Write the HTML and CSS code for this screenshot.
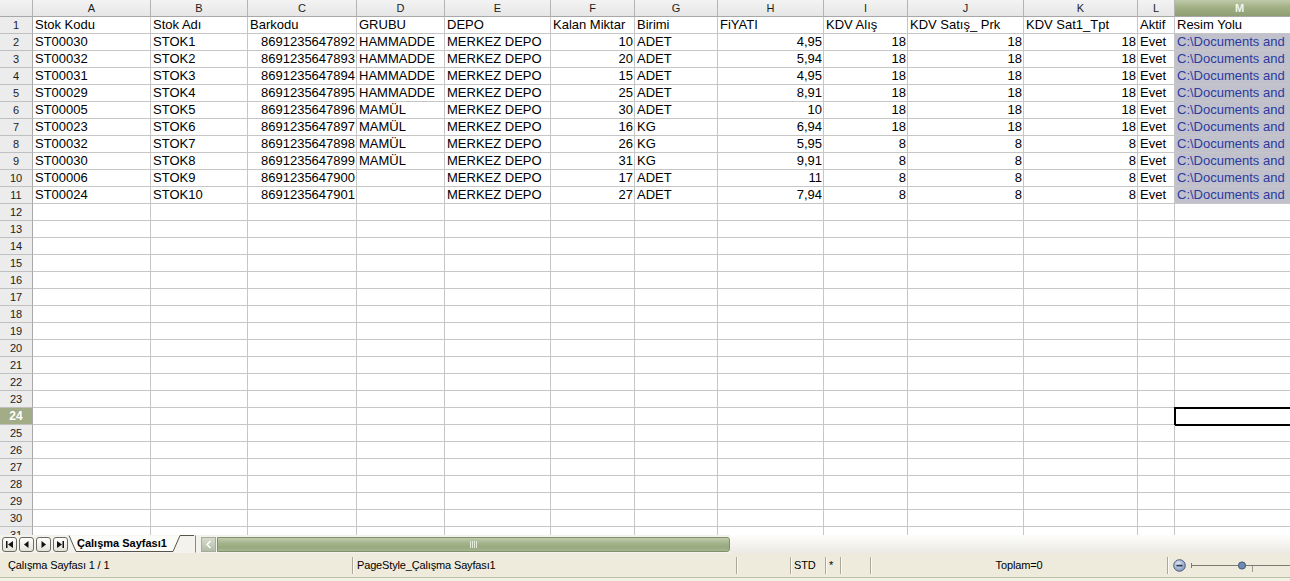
FILE: index.html
```html
<!DOCTYPE html>
<html lang="tr">
<head>
<meta charset="utf-8">
<title>Stok Listesi - Calc</title>
<link rel="stylesheet" href="styles.css">
</head>
<body>
<div class="sheet">
  <div class="corner"></div>
  <div class="ch">A</div><div class="ch">B</div><div class="ch">C</div><div class="ch">D</div><div class="ch">E</div><div class="ch">F</div><div class="ch">G</div><div class="ch">H</div><div class="ch">I</div><div class="ch">J</div><div class="ch">K</div><div class="ch">L</div><div class="ch sel">M</div>

  <div class="rh">1</div><div>Stok Kodu</div><div>Stok Adı</div><div>Barkodu</div><div>GRUBU</div><div>DEPO</div><div>Kalan Miktar</div><div>Birimi</div><div>FiYATI</div><div>KDV Alış</div><div>KDV Satış_ Prk</div><div>KDV Sat1_Tpt</div><div>Aktif</div><div>Resim Yolu</div>

  <div class="rh">2</div><div>ST00030</div><div>STOK1</div><div class="n">8691235647892</div><div>HAMMADDE</div><div>MERKEZ DEPO</div><div class="n">10</div><div>ADET</div><div class="n">4,95</div><div class="n">18</div><div class="n">18</div><div class="n">18</div><div>Evet</div><div class="hl">C:\Documents and</div>
  <div class="rh">3</div><div>ST00032</div><div>STOK2</div><div class="n">8691235647893</div><div>HAMMADDE</div><div>MERKEZ DEPO</div><div class="n">20</div><div>ADET</div><div class="n">5,94</div><div class="n">18</div><div class="n">18</div><div class="n">18</div><div>Evet</div><div class="hl">C:\Documents and</div>
  <div class="rh">4</div><div>ST00031</div><div>STOK3</div><div class="n">8691235647894</div><div>HAMMADDE</div><div>MERKEZ DEPO</div><div class="n">15</div><div>ADET</div><div class="n">4,95</div><div class="n">18</div><div class="n">18</div><div class="n">18</div><div>Evet</div><div class="hl">C:\Documents and</div>
  <div class="rh">5</div><div>ST00029</div><div>STOK4</div><div class="n">8691235647895</div><div>HAMMADDE</div><div>MERKEZ DEPO</div><div class="n">25</div><div>ADET</div><div class="n">8,91</div><div class="n">18</div><div class="n">18</div><div class="n">18</div><div>Evet</div><div class="hl">C:\Documents and</div>
  <div class="rh">6</div><div>ST00005</div><div>STOK5</div><div class="n">8691235647896</div><div>MAMÜL</div><div>MERKEZ DEPO</div><div class="n">30</div><div>ADET</div><div class="n">10</div><div class="n">18</div><div class="n">18</div><div class="n">18</div><div>Evet</div><div class="hl">C:\Documents and</div>
  <div class="rh">7</div><div>ST00023</div><div>STOK6</div><div class="n">8691235647897</div><div>MAMÜL</div><div>MERKEZ DEPO</div><div class="n">16</div><div>KG</div><div class="n">6,94</div><div class="n">18</div><div class="n">18</div><div class="n">18</div><div>Evet</div><div class="hl">C:\Documents and</div>
  <div class="rh">8</div><div>ST00032</div><div>STOK7</div><div class="n">8691235647898</div><div>MAMÜL</div><div>MERKEZ DEPO</div><div class="n">26</div><div>KG</div><div class="n">5,95</div><div class="n">8</div><div class="n">8</div><div class="n">8</div><div>Evet</div><div class="hl">C:\Documents and</div>
  <div class="rh">9</div><div>ST00030</div><div>STOK8</div><div class="n">8691235647899</div><div>MAMÜL</div><div>MERKEZ DEPO</div><div class="n">31</div><div>KG</div><div class="n">9,91</div><div class="n">8</div><div class="n">8</div><div class="n">8</div><div>Evet</div><div class="hl">C:\Documents and</div>
  <div class="rh">10</div><div>ST00006</div><div>STOK9</div><div class="n">8691235647900</div><div></div><div>MERKEZ DEPO</div><div class="n">17</div><div>ADET</div><div class="n">11</div><div class="n">8</div><div class="n">8</div><div class="n">8</div><div>Evet</div><div class="hl">C:\Documents and</div>
  <div class="rh">11</div><div>ST00024</div><div>STOK10</div><div class="n">8691235647901</div><div></div><div>MERKEZ DEPO</div><div class="n">27</div><div>ADET</div><div class="n">7,94</div><div class="n">8</div><div class="n">8</div><div class="n">8</div><div>Evet</div><div class="hl">C:\Documents and</div>

  <div class="rh">12</div><div></div><div></div><div></div><div></div><div></div><div></div><div></div><div></div><div></div><div></div><div></div><div></div><div></div>
  <div class="rh">13</div><div></div><div></div><div></div><div></div><div></div><div></div><div></div><div></div><div></div><div></div><div></div><div></div><div></div>
  <div class="rh">14</div><div></div><div></div><div></div><div></div><div></div><div></div><div></div><div></div><div></div><div></div><div></div><div></div><div></div>
  <div class="rh">15</div><div></div><div></div><div></div><div></div><div></div><div></div><div></div><div></div><div></div><div></div><div></div><div></div><div></div>
  <div class="rh">16</div><div></div><div></div><div></div><div></div><div></div><div></div><div></div><div></div><div></div><div></div><div></div><div></div><div></div>
  <div class="rh">17</div><div></div><div></div><div></div><div></div><div></div><div></div><div></div><div></div><div></div><div></div><div></div><div></div><div></div>
  <div class="rh">18</div><div></div><div></div><div></div><div></div><div></div><div></div><div></div><div></div><div></div><div></div><div></div><div></div><div></div>
  <div class="rh">19</div><div></div><div></div><div></div><div></div><div></div><div></div><div></div><div></div><div></div><div></div><div></div><div></div><div></div>
  <div class="rh">20</div><div></div><div></div><div></div><div></div><div></div><div></div><div></div><div></div><div></div><div></div><div></div><div></div><div></div>
  <div class="rh">21</div><div></div><div></div><div></div><div></div><div></div><div></div><div></div><div></div><div></div><div></div><div></div><div></div><div></div>
  <div class="rh">22</div><div></div><div></div><div></div><div></div><div></div><div></div><div></div><div></div><div></div><div></div><div></div><div></div><div></div>
  <div class="rh">23</div><div></div><div></div><div></div><div></div><div></div><div></div><div></div><div></div><div></div><div></div><div></div><div></div><div></div>
  <div class="rh sel">24</div><div></div><div></div><div></div><div></div><div></div><div></div><div></div><div></div><div></div><div></div><div></div><div></div><div class="cur"></div>
  <div class="rh">25</div><div></div><div></div><div></div><div></div><div></div><div></div><div></div><div></div><div></div><div></div><div></div><div></div><div></div>
  <div class="rh">26</div><div></div><div></div><div></div><div></div><div></div><div></div><div></div><div></div><div></div><div></div><div></div><div></div><div></div>
  <div class="rh">27</div><div></div><div></div><div></div><div></div><div></div><div></div><div></div><div></div><div></div><div></div><div></div><div></div><div></div>
  <div class="rh">28</div><div></div><div></div><div></div><div></div><div></div><div></div><div></div><div></div><div></div><div></div><div></div><div></div><div></div>
  <div class="rh">29</div><div></div><div></div><div></div><div></div><div></div><div></div><div></div><div></div><div></div><div></div><div></div><div></div><div></div>
  <div class="rh">30</div><div></div><div></div><div></div><div></div><div></div><div></div><div></div><div></div><div></div><div></div><div></div><div></div><div></div>
  <div class="rh">31</div><div></div><div></div><div></div><div></div><div></div><div></div><div></div><div></div><div></div><div></div><div></div><div></div><div></div>
</div>

<div class="tabbar">
  <div class="nav">
    <span class="navbtn"><svg width="9" height="9" viewBox="0 0 9 9"><rect x="1" y="1" width="1.5" height="7"/><path d="M8 1 L3 4.5 L8 8 Z"/></svg></span>
    <span class="navbtn"><svg width="9" height="9" viewBox="0 0 9 9"><path d="M6.5 1 L2 4.5 L6.5 8 Z"/></svg></span>
    <span class="navbtn"><svg width="9" height="9" viewBox="0 0 9 9"><path d="M2.5 1 L7 4.5 L2.5 8 Z"/></svg></span>
    <span class="navbtn"><svg width="9" height="9" viewBox="0 0 9 9"><path d="M1 1 L6 4.5 L1 8 Z"/><rect x="6.5" y="1" width="1.5" height="7"/></svg></span>
  </div>
  <div class="tab">
    <svg class="tabshape" width="133" height="18" viewBox="0 0 133 18">
      <path d="M1 0.5 L8 16.5 L105 16.5 L112 0.5 Z" fill="#fbfbf8"/>
      <path d="M1 0.5 L8 16.5 L105 16.5 L112 0.5 L126 0.5" fill="none" stroke="#55554c" stroke-width="1"/>
      <path d="M127.5 0.5 L127.5 17.5" fill="none" stroke="#8a8a80" stroke-width="1"/>
    </svg>
    <span class="tabname">Çalışma Sayfası1</span>
  </div>
  <div class="scrollleft"><svg width="7" height="9" viewBox="0 0 7 9"><path d="M5.5 1 L2 4.5 L5.5 8" fill="none" stroke="#fff" stroke-width="1.6"/></svg></div>
  <div class="track"><span class="grip"></span></div>
  <div class="tabrest"></div>
</div>

<div class="status">
  <div class="f1">Çalışma Sayfası 1 / 1</div>
  <div class="f2">PageStyle_Çalışma Sayfası1</div>
  <div class="f3"></div>
  <div class="f4">STD</div>
  <div class="f5">*</div>
  <div class="f6"></div>
  <div class="f7">Toplam=0</div>
  <div class="f8">
    <svg class="zoomout" width="13" height="13" viewBox="0 0 13 13">
      <defs><radialGradient id="zg" cx="0.4" cy="0.35" r="0.7"><stop offset="0" stop-color="#dfe7f3"/><stop offset="1" stop-color="#7d93b8"/></radialGradient></defs>
      <circle cx="6.5" cy="6.5" r="5.8" fill="url(#zg)" stroke="#4d5e80" stroke-width="1"/>
      <rect x="3.5" y="5.8" width="6" height="1.6" fill="#27344f"/>
    </svg>
    <svg class="slider" width="110" height="17" viewBox="0 0 110 17">
      <line x1="0" y1="8.5" x2="110" y2="8.5" stroke="#7b7b74" stroke-width="1"/>
      <line x1="0.5" y1="6" x2="0.5" y2="11" stroke="#7b7b74" stroke-width="1"/>
      <line x1="61.5" y1="9" x2="61.5" y2="15" stroke="#9a9a92" stroke-width="1"/>
      <circle cx="51" cy="8.5" r="3.6" fill="#6f8ab0" stroke="#3f5478" stroke-width="1"/>
    </svg>
  </div>
</div>
<div class="bottomstrip"></div>
</body>
</html>
```

FILE: styles.css
```css
html, body {
  margin: 0;
  padding: 0;
}

body {
  width: 1290px;
  height: 581px;
  overflow: hidden;
  background: #f2f0e5;
  font-family: "Liberation Sans", Arial, sans-serif;
}

/* ---------- spreadsheet grid ---------- */
.sheet {
  display: grid;
  grid-template-columns: 33px 118px 97px 109px 88px 106px 84px 83px 106px 84px 116px 114px 37px 130px;
  grid-auto-rows: 17px;
  width: 1290px;
  height: 535px;
  overflow: hidden;
  background: #fff;
}

.sheet > div {
  box-sizing: border-box;
  border-right: 1px solid #c6c6c6;
  border-bottom: 1px solid #c6c6c6;
  padding: 0 2px;
  font-size: 13px;
  line-height: 16px;
  color: #000;
  white-space: nowrap;
  overflow: hidden;
}

.sheet > .n {
  text-align: right;
  padding-right: 1px;
}

.sheet > .corner,
.sheet > .ch,
.sheet > .rh {
  background: #ececec;
  font-size: 11px;
  text-align: center;
  color: #1c1c1c;
  padding: 0;
}

.sheet > .corner,
.sheet > .ch {
  border-right-color: #b4b4b4;
  border-bottom-color: #a8a8a8;
  background: linear-gradient(#f3f3f3, #e6e6e6);
}

.sheet > .rh {
  border-right-color: #a8a8a8;
  border-bottom-color: #c0c0c0;
}

.sheet > .ch.sel {
  background: linear-gradient(#bfcaa9 0%, #a2b086 45%, #8e9d72 100%);
  color: #f4f6ee;
  font-weight: bold;
  border-right-color: #8a9870;
}

.sheet > .rh.sel {
  background: #a2ac87;
  color: #fff;
  font-weight: bold;
  font-size: 12px;
}

.sheet > .hl {
  background: #c1c1cd;
  color: #2b3a9e;
}

.sheet > .cur {
  overflow: visible;
  outline: 2px solid #000;
  outline-offset: -1px;
}

/* ---------- sheet tabs + horizontal scrollbar ---------- */
.tabbar {
  display: flex;
  align-items: center;
  height: 18px;
  background: #f3f2ec;
}

.nav {
  display: flex;
  gap: 2px;
  padding-left: 2px;
}

.navbtn {
  box-sizing: border-box;
  width: 15px;
  height: 15px;
  border: 1px solid #6a6a62;
  border-radius: 3px;
  background: linear-gradient(#ffffff, #e4e3da);
  display: flex;
  align-items: center;
  justify-content: center;
}

.navbtn svg {
  fill: #111;
}

.tab {
  position: relative;
  width: 133px;
  height: 18px;
  flex: none;
}

.tabshape {
  position: absolute;
  left: 0;
  top: 0;
}

.tabname {
  position: relative;
  display: block;
  padding-left: 9px;
  font-size: 11px;
  font-weight: bold;
  line-height: 17px;
  color: #000;
  white-space: nowrap;
}

.scrollleft {
  box-sizing: border-box;
  width: 15px;
  height: 15px;
  flex: none;
  border: 1px solid #a3ad98;
  background: linear-gradient(#d6dccd, #b3bca7);
  display: flex;
  align-items: center;
  justify-content: center;
}

.track {
  box-sizing: border-box;
  width: 513px;
  height: 15px;
  margin-left: 1px;
  flex: none;
  border: 1px solid #7f906a;
  border-radius: 0 3px 3px 0;
  background: linear-gradient(#c0ccac 0%, #a3b48b 40%, #97a97e 70%, #a6b690 100%);
  display: flex;
  align-items: center;
  justify-content: center;
}

.grip {
  width: 7px;
  height: 7px;
  background: repeating-linear-gradient(90deg, #e6ecdc 0 1px, transparent 1px 2px);
}

.tabrest {
  flex: 1;
  height: 18px;
  background: linear-gradient(#fdfdfc, #ebeae4);
}

/* ---------- status bar ---------- */
.status {
  display: flex;
  align-items: center;
  height: 24px;
  border-bottom: 1px solid #b9c0a6;
  background: #eeebdd;
  font-size: 11px;
  letter-spacing: -0.15px;
  color: #000;
}

.status > div {
  box-sizing: border-box;
  height: 17px;
  line-height: 17px;
  border-left: 1px solid #aca899;
  box-shadow: inset 1px 0 #fbfaf4;
  white-space: nowrap;
  flex: none;
}

.status > .f1 {
  width: 352px;
  border-left: 0;
  box-shadow: none;
  padding-left: 8px;
}

.status > .f2 { width: 384px; padding-left: 4px; }
.status > .f3 { width: 54px; }
.status > .f4 { width: 35px; padding-left: 3px; }
.status > .f5 { width: 15px; padding-left: 3px; }
.status > .f6 { width: 30px; }
.status > .f7 { width: 297px; text-align: center; }

.status > .f8 {
  flex: 1;
  display: flex;
  align-items: center;
  padding-left: 5px;
  overflow: hidden;
}

.zoomout {
  flex: none;
}

.slider {
  flex: none;
  margin-left: 5px;
}

.bottomstrip {
  height: 3px;
  background: #f3f1e6;
}
```
